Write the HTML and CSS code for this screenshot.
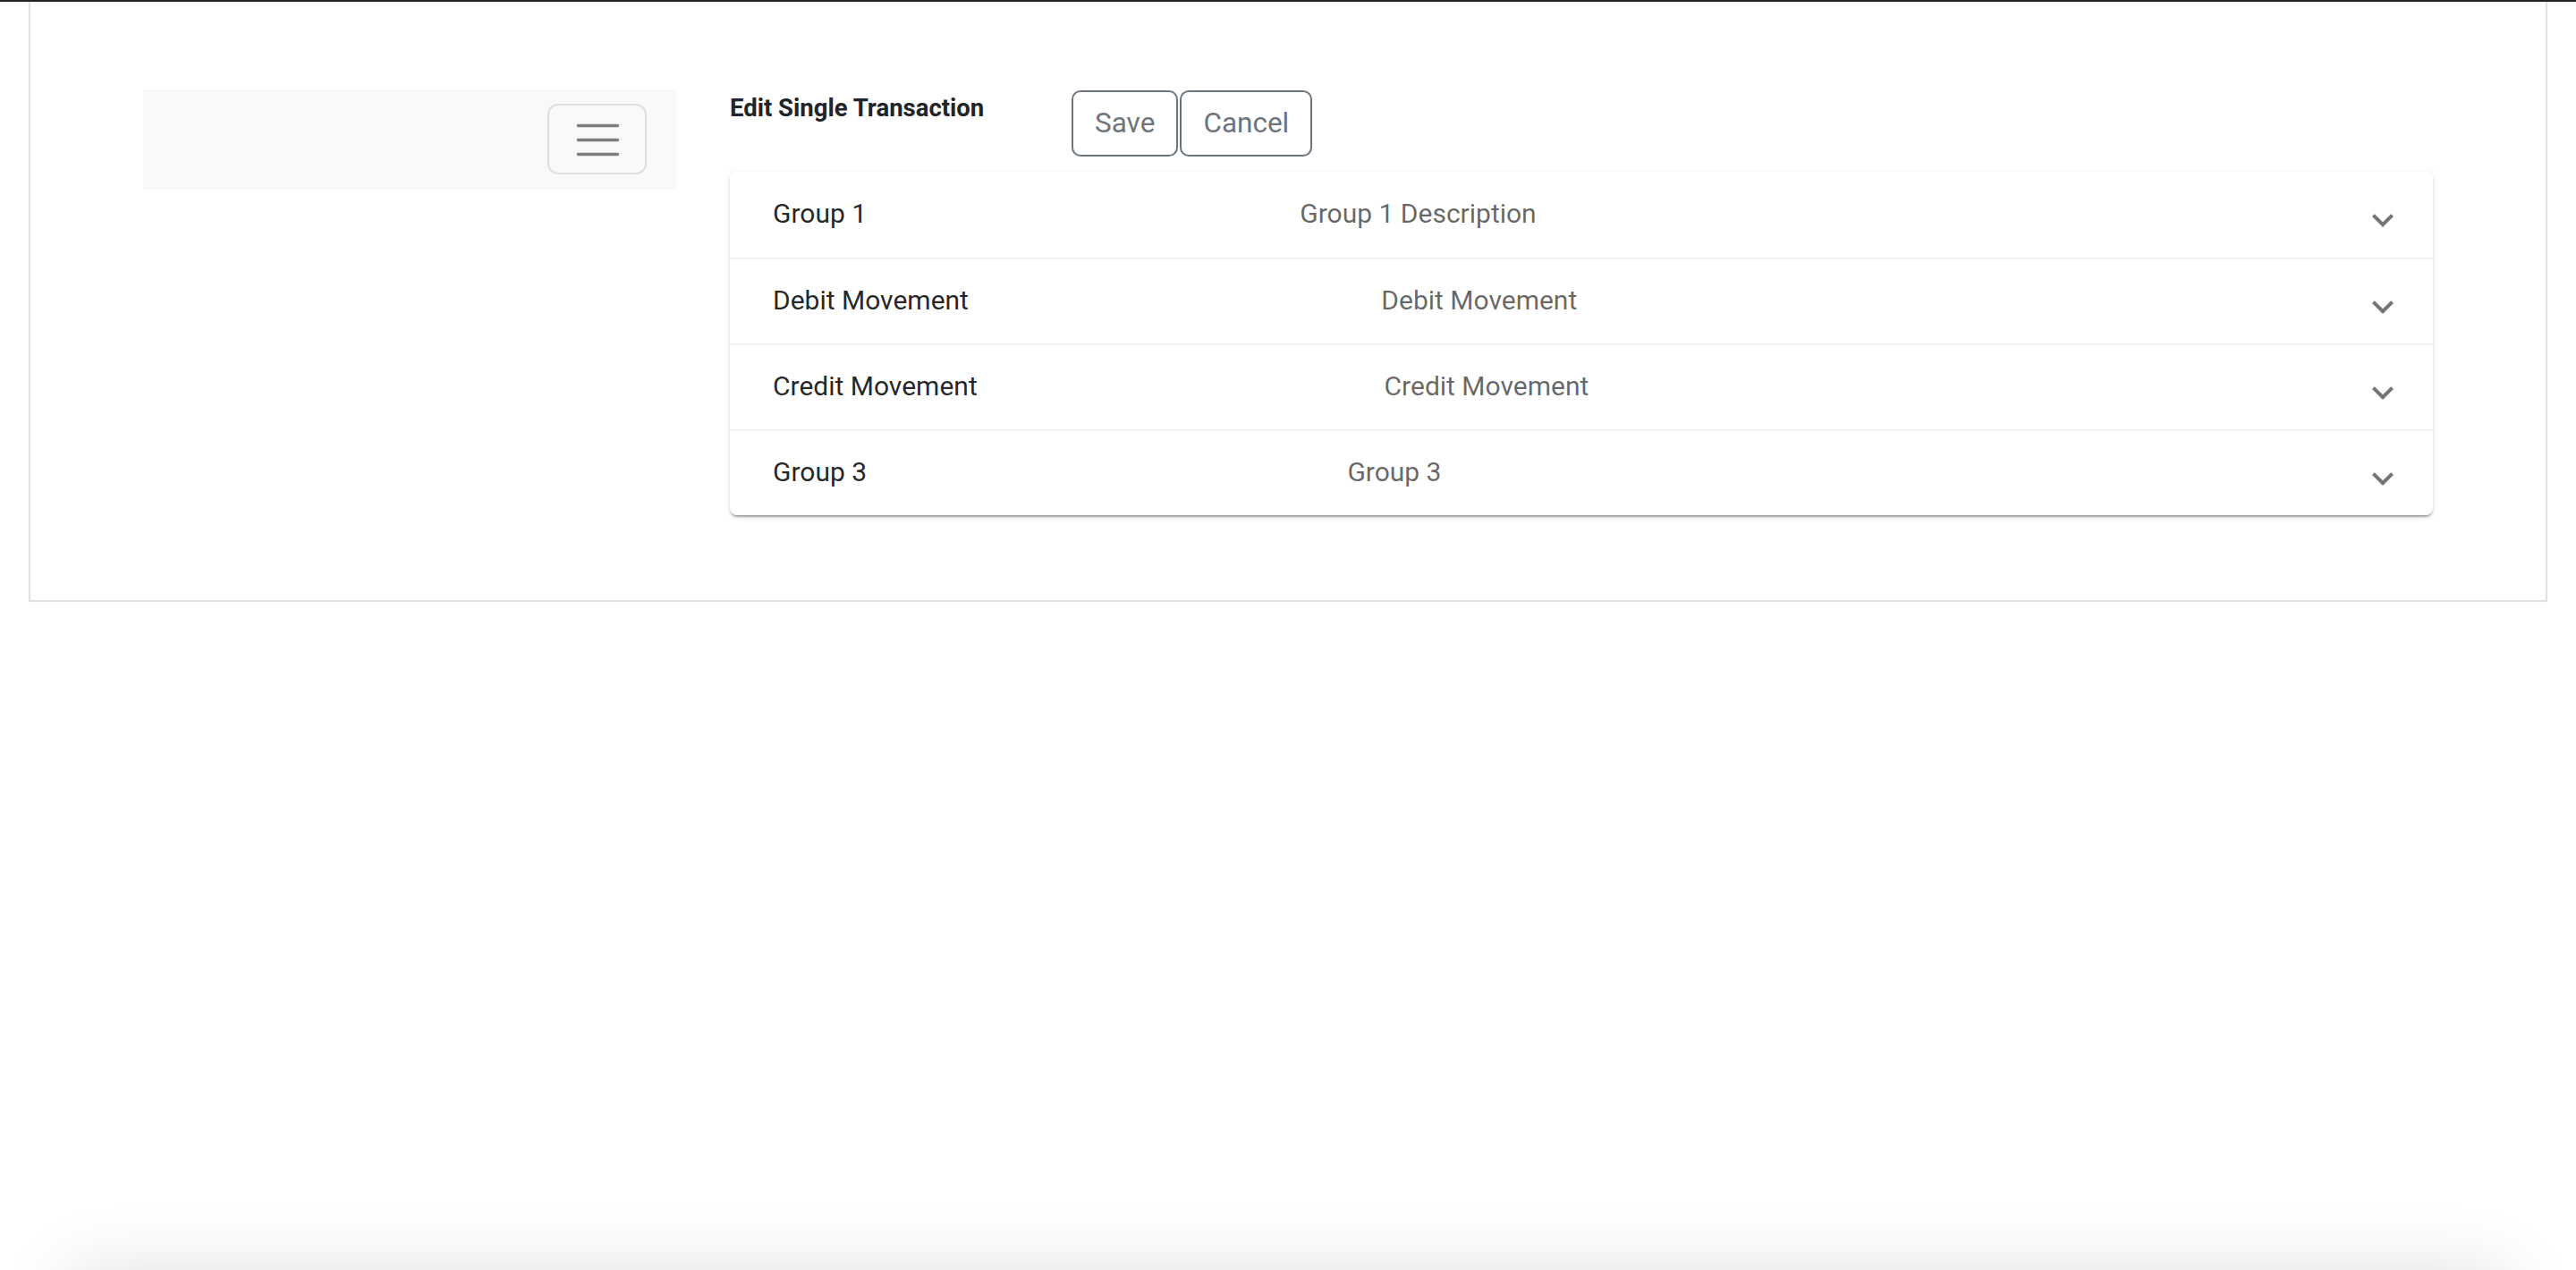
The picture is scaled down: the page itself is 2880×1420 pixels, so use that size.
FILE: index.html
```html
<!DOCTYPE html>
<html lang="en">
<head>
<meta charset="utf-8">
<title>Edit Single Transaction</title>
<link rel="stylesheet" href="styles.css">
</head>
<body>
<div class="topbar"></div>
<div class="frame">
  <nav class="sidenav">
    <button class="toggler" type="button" aria-label="Toggle navigation">
      <svg width="60" height="60" viewBox="0 0 60 60">
        <path d="M8.5 14.5H52.5M8.5 30.5H52.5M8.5 46.5H52.5" stroke="#7d7d7d" stroke-width="3.5" stroke-linecap="round" fill="none"/>
      </svg>
    </button>
  </nav>
  <main class="main">
    <div class="header">
      <h6 class="heading">Edit Single Transaction</h6>
      <div class="actions">
        <button class="btn" type="button">Save</button>
        <button class="btn" type="button">Cancel</button>
      </div>
    </div>
    <div class="accordion">
      <div class="row">
        <span class="title">Group 1</span>
        <span class="desc">Group 1 Description</span>
        <span class="icon"><svg width="48" height="48" viewBox="0 0 24 24"><path d="M16.59 8.59 12 13.17 7.41 8.59 6 10l6 6 6-6z" fill="#757575"/></svg></span>
      </div>
      <div class="row">
        <span class="title">Debit Movement</span>
        <span class="desc">Debit Movement</span>
        <span class="icon"><svg width="48" height="48" viewBox="0 0 24 24"><path d="M16.59 8.59 12 13.17 7.41 8.59 6 10l6 6 6-6z" fill="#757575"/></svg></span>
      </div>
      <div class="row">
        <span class="title">Credit Movement</span>
        <span class="desc">Credit Movement</span>
        <span class="icon"><svg width="48" height="48" viewBox="0 0 24 24"><path d="M16.59 8.59 12 13.17 7.41 8.59 6 10l6 6 6-6z" fill="#757575"/></svg></span>
      </div>
      <div class="row">
        <span class="title">Group 3</span>
        <span class="desc">Group 3</span>
        <span class="icon"><svg width="48" height="48" viewBox="0 0 24 24"><path d="M16.59 8.59 12 13.17 7.41 8.59 6 10l6 6 6-6z" fill="#757575"/></svg></span>
      </div>
    </div>
  </main>
</div>
<div class="footer-shadow"></div>
</body>
</html>
```

FILE: styles.css
```css
* {
  box-sizing: border-box;
}

html, body {
  margin: 0;
  padding: 0;
  background: #ffffff;
  font-family: Roboto, "Liberation Sans", Arial, sans-serif;
  color: #212529;
  overflow: hidden;
}

.topbar {
  height: 2px;
  background: #232527;
}

.frame {
  margin: 0 32px;
  border: 2px solid #dee2e6;
  border-top: none;
  padding: 98px 126px 95px 126px;
  display: flex;
  align-items: flex-start;
  gap: 60px;
}

.sidenav {
  flex: 0 0 596px;
  height: 112px;
  background: #f8f9fa;
  display: flex;
  justify-content: flex-end;
  align-items: flex-start;
  padding: 16px 33px 17px 0;
}

.toggler {
  width: 111px;
  height: 79px;
  border: 2px solid rgba(0, 0, 0, 0.1);
  border-radius: 12px;
  background: transparent;
  padding: 0;
  display: flex;
  align-items: center;
  justify-content: center;
}

.toggler svg {
  display: block;
}

.main {
  flex: 1 1 auto;
  padding-top: 1px;
}

.header {
  display: flex;
  align-items: flex-start;
  height: 74px;
  margin-bottom: 17px;
}

.heading {
  flex: 0 0 382px;
  margin: 0;
  padding-top: 2px;
  font-size: 27.5px;
  line-height: 36px;
  font-weight: 700;
  color: #212529;
}

.actions {
  display: flex;
  gap: 2px;
}

.btn {
  font-family: Roboto, "Liberation Sans", Arial, sans-serif;
  font-size: 31.5px;
  line-height: 44px;
  padding: 13px 24px;
  border: 2px solid #6c757d;
  border-radius: 10px;
  background: #ffffff;
  color: #6c757d;
}

.accordion {
  background: #ffffff;
  border-radius: 8px;
  box-shadow: 0 4px 2px -2px rgba(0, 0, 0, 0.2), 0 2px 2px 0 rgba(0, 0, 0, 0.14), 0 2px 6px 0 rgba(0, 0, 0, 0.12);
}

.row {
  height: 96px;
  display: flex;
  align-items: center;
  padding: 0 32px 2px 48px;
  font-size: 30px;
  line-height: 48px;
}

.row + .row {
  border-top: 2px solid #f1f1f1;
}

.title {
  flex: 1 1 auto;
  color: rgba(0, 0, 0, 0.87);
}

.desc {
  flex: 2 1 auto;
  margin-left: 23px;
  color: rgba(0, 0, 0, 0.6);
}

.icon {
  flex: 0 0 48px;
  height: 48px;
  margin-top: 14px;
}

.icon svg {
  display: block;
}

.footer-shadow {
  position: fixed;
  left: 70px;
  right: 70px;
  top: 1420px;
  height: 200px;
  border-radius: 40px;
  background: #ffffff;
  box-shadow: 0 0 80px rgba(0, 0, 0, 0.12);
}
```
